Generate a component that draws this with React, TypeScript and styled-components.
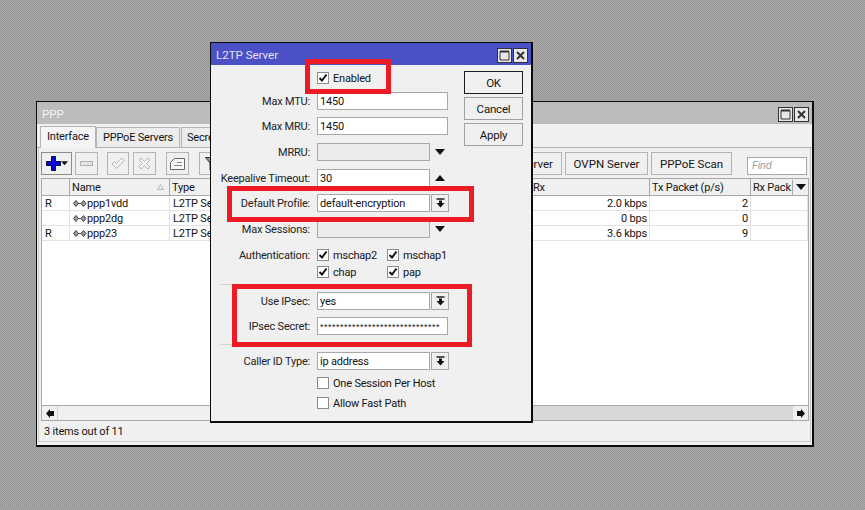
import React from "react"
import styled, { createGlobalStyle } from "styled-components"

const GlobalStyle = createGlobalStyle`
  html, body {
    margin: 0;
    padding: 0;
    height: 100%;
  }
  body {
    font-family: Roboto, "Liberation Sans", Arial, sans-serif;
    font-size: 11px;
    letter-spacing: -0.2px;
    color: #141414;
    overflow: hidden;
  }
`

const Desktop = styled.div`
  position: relative;
  width: 865px;
  height: 510px;
  overflow: hidden;
  background: repeating-conic-gradient(#a9a9a9 0 25%, #979797 0 50%) 0 0 / 2px 2px;
`

const Window = styled.div<{ $x: number; $y: number; $w: number; $h: number }>`
  position: absolute;
  left: ${p => p.$x}px;
  top: ${p => p.$y}px;
  width: ${p => p.$w}px;
  height: ${p => p.$h}px;
  box-sizing: border-box;
  display: flex;
  flex-direction: column;
  background: #f0f0f0;
  border: 1px solid #0c0c0c;
  border-width: 1px 2px 2px 1px;
`

const TitleBar = styled.div<{ $active?: boolean }>`
  flex: 0 0 22px;
  box-sizing: border-box;
  display: flex;
  align-items: center;
  justify-content: space-between;
  padding: 2px 3px 0 5px;
  background: ${p => (p.$active ? "#4b50c6" : "#bcbcbc")};
  color: ${p => (p.$active ? "#e4e4f2" : "#f4f4f4")};
  font-size: 11.5px;
  letter-spacing: 0;
`

const TitleButtons = styled.div`
  display: flex;
  gap: 1px;
`

const TitleButton = styled.div`
  width: 15px;
  height: 15px;
  box-sizing: border-box;
  border: 1px solid #333;
  background: #e8e8e8;
  display: flex;
  align-items: center;
  justify-content: center;
`

const Tabs = styled.div`
  flex: 0 0 24px;
  display: flex;
  align-items: flex-end;
  padding-left: 3px;
  border-bottom: 1px solid #b4b4b4;
  box-sizing: border-box;
`

const Tab = styled.div<{ $active?: boolean; $w?: number }>`
  width: ${p => (p.$w ? `${p.$w}px` : "auto")};
  height: ${p => (p.$active ? 22 : 20)}px;
  box-sizing: border-box;
  padding: ${p => (p.$active ? "0 0 3px" : "0 5px")};
  display: flex;
  align-items: center;
  justify-content: center;
  white-space: nowrap;
  border: 1px solid #b4b4b4;
  border-bottom: none;
  margin-right: ${p => (p.$active ? 0 : 1)}px;
  background: ${p => (p.$active ? "#f5f5f5" : "#ececec")};
  margin-bottom: ${p => (p.$active ? -1 : 0)}px;
`

const Panel = styled.div`
  flex: 1;
  display: flex;
  flex-direction: column;
  box-sizing: border-box;
  margin: 0 1px 3px 1px;
  padding: 4px 1px 0 2px;
  border: 1px solid #c8c8c8;
  border-top: none;
  min-height: 0;
`

const Toolbar = styled.div`
  flex: 0 0 23px;
  display: flex;
  align-items: stretch;
  margin-bottom: 3px;
`

const ToolButton = styled.div<{ $w: number; $ml?: number; $dark?: boolean }>`
  width: ${p => p.$w}px;
  margin-left: ${p => p.$ml ?? 0}px;
  box-sizing: border-box;
  flex: none;
  border: 1px solid ${p => (p.$dark ? "#8c8c8c" : "#b4b4b4")};
  display: flex;
  align-items: center;
  justify-content: center;
  white-space: nowrap;
  font-size: 11.5px;
  letter-spacing: 0;
`

const ToolbarEnd = styled.div`
  margin-left: auto;
  display: flex;
  align-items: stretch;
  gap: 3px;
`

const FindBox = styled.div`
  width: 60px;
  height: 18px;
  align-self: flex-end;
  box-sizing: border-box;
  margin-left: 12px;
  margin-right: 2px;
  border: 1px solid #a8a8a8;
  background: #fff;
  color: #a0a0a0;
  font-style: italic;
  padding-left: 4px;
  line-height: 16px;
`

const List = styled.div`
  flex: 1;
  display: flex;
  flex-direction: column;
  background: #fff;
  border: 1px solid #a8a8a8;
  border-width: 1px 1px 0 1px;
  min-height: 0;
`

const columns = "28px 100px 361px 119px 101px 1fr"

const HeaderRow = styled.div`
  flex: 0 0 16px;
  display: grid;
  grid-template-columns: ${columns};
  background: #f0f0f0;
  border-bottom: 1px solid #a8a8a8;
`

const HeaderCell = styled.div`
  box-sizing: border-box;
  border-right: 1px solid #a8a8a8;
  padding-left: 2px;
  display: flex;
  align-items: center;
  justify-content: space-between;
  overflow: hidden;
  white-space: nowrap;

  &:last-child {
    border-right: none;
    padding-right: 0;
  }
`

const SortMark = styled.span`
  display: flex;
  margin-right: 5px;
`

const HeaderDrop = styled.div`
  width: 15px;
  height: 15px;
  flex: none;
  border-left: 1px solid #a8a8a8;
  background: #f0f0f0;
  display: flex;
  align-items: center;
  justify-content: center;
`

const DataRow = styled.div`
  flex: 0 0 15px;
  box-sizing: border-box;
  display: grid;
  grid-template-columns: ${columns};
  border-bottom: 1px solid #e2e2e2;
`

const Cell = styled.div<{ $right?: boolean }>`
  box-sizing: border-box;
  border-right: 1px solid #e2e2e2;
  padding: 0 2px 0 3px;
  display: flex;
  align-items: center;
  justify-content: ${p => (p.$right ? "flex-end" : "flex-start")};
  white-space: nowrap;
  overflow: hidden;
`

const ListFill = styled.div`
  flex: 1;
`

const ScrollBar = styled.div`
  flex: 0 0 16px;
  display: flex;
  background: #d8d8d8;
  border: 1px solid #a8a8a8;
  box-sizing: border-box;
`

const ScrollArrow = styled.div`
  width: 15px;
  flex: none;
  background: #f0f0f0;
  display: flex;
  align-items: center;
  justify-content: center;
`

const ScrollThumb = styled.div`
  flex: 0 0 300px;
  background: #f0f0f0;
  border-left: 1px solid #d0d0d0;
  border-right: 1px solid #a8a8a8;
`

const ScrollTrack = styled.div`
  flex: 1;
`

const StatusBar = styled.div`
  flex: 0 0 20px;
  display: flex;
  align-items: center;
  padding-left: 3px;
`

const DialogBody = styled.div`
  flex: 1;
  display: flex;
  min-height: 0;
`

const Form = styled.div`
  width: 252px;
  flex: none;
  display: flex;
  flex-direction: column;
  padding-top: 7px;
`

const FormRow = styled.div<{ $mb?: number; $mt?: number }>`
  display: flex;
  align-items: center;
  height: 18px;
  margin-top: ${p => p.$mt ?? 0}px;
  margin-bottom: ${p => p.$mb ?? 7}px;
`

const CheckRow = styled.div<{ $mb?: number; $flush?: boolean }>`
  display: flex;
  align-items: center;
  height: 12px;
  padding-left: ${p => (p.$flush ? 0 : 106)}px;
  margin-bottom: ${p => p.$mb ?? 5}px;
`

const Label = styled.div`
  width: 99px;
  margin-right: 7px;
  padding-top: 1px;
  flex: none;
  text-align: right;
  white-space: nowrap;
  color: #222;
`

const Field = styled.div<{ $w?: number; $off?: boolean }>`
  width: ${p => p.$w ?? 131}px;
  height: 18px;
  box-sizing: border-box;
  flex: none;
  border: 1px solid #a8a8a8;
  background: ${p => (p.$off ? "#ececec" : "#fff")};
  padding-left: 2px;
  line-height: 18px;
  white-space: nowrap;
  overflow: hidden;
`

const SecretText = styled.span`
  font-family: "Liberation Sans", Arial, sans-serif;
  font-size: 9px;
  letter-spacing: 0.5px;
`

const SelectButton = styled.div`
  width: 18px;
  height: 18px;
  box-sizing: border-box;
  margin-left: 1px;
  border: 1px solid #a8a8a8;
  display: flex;
  align-items: center;
  justify-content: center;
`

const SpinSlot = styled.div`
  width: 18px;
  height: 18px;
  margin-left: 1px;
  display: flex;
  align-items: center;
  justify-content: center;
`

const Box = styled.div`
  width: 12px;
  height: 12px;
  flex: none;
  box-sizing: border-box;
  border: 1px solid #8c8c8c;
  background: #fff;
  display: flex;
  align-items: center;
  justify-content: center;
`

const CheckText = styled.span<{ $w?: number }>`
  margin-left: 4px;
  white-space: nowrap;
  width: ${p => (p.$w ? `${p.$w}px` : "auto")};
`

const Separator = styled.div`
  height: 1px;
  width: 228px;
  margin-left: 9px;
  background: #d4d4d4;
`

const ActionColumn = styled.div`
  display: flex;
  flex-direction: column;
  gap: 3px;
  padding: 6px 0 0 1px;
`

const ActionButton = styled.div<{ $main?: boolean }>`
  width: 59px;
  height: 23px;
  box-sizing: border-box;
  border: 1px solid ${p => (p.$main ? "#1c1c1c" : "#a0a0a0")};
  display: flex;
  align-items: center;
  justify-content: center;
  font-size: 11.5px;
`

const Highlight = styled.div<{ $x: number; $y: number; $w: number; $h: number }>`
  position: absolute;
  left: ${p => p.$x}px;
  top: ${p => p.$y}px;
  width: ${p => p.$w}px;
  height: ${p => p.$h}px;
  box-sizing: border-box;
  border: 5px solid #ed1c24;
  pointer-events: none;
`

const Check = () => (
  <svg width="10" height="10" viewBox="0 0 10 10">
    <path d="M1.5 5 L4 7.5 L8.5 1.5" fill="none" stroke="#111" strokeWidth="2" />
  </svg>
)

const MaxIcon = () => (
  <svg width="11" height="11" viewBox="0 0 11 11">
    <path d="M1 1.5 H10 V10 H1 Z" fill="none" stroke="#333" strokeWidth="1" />
    <path d="M1 1.5 H10" stroke="#333" strokeWidth="2" />
  </svg>
)

const CloseIcon = () => (
  <svg width="9" height="9" viewBox="0 0 9 9">
    <path d="M1 1 L8 8 M8 1 L1 8" stroke="#333" strokeWidth="2" />
  </svg>
)

const TriangleDown = ({ size = 9 }: { size?: number }) => (
  <svg width={size} height={size / 2 + 1} viewBox="0 0 10 6">
    <path d="M0 0 H10 L5 6 Z" fill="#111" />
  </svg>
)

const TriangleUp = () => (
  <svg width="10" height="6" viewBox="0 0 10 6">
    <path d="M0 6 H10 L5 0 Z" fill="#111" />
  </svg>
)

const SelectIcon = () => (
  <svg width="9" height="10" viewBox="0 0 9 10">
    <path d="M0.5 1 H8.5" stroke="#111" strokeWidth="1.4" />
    <path d="M3 2.5 H6 V5 H8.5 L4.5 9.5 L0.5 5 H3 Z" fill="#111" />
  </svg>
)

const PlusIcon = () => (
  <svg width="15" height="15" viewBox="0 0 15 15">
    <path d="M5.5 0.5 H9.5 V5.5 H14.5 V9.5 H9.5 V14.5 H5.5 V9.5 H0.5 V5.5 H5.5 Z" fill="#0a0ad8" stroke="#0a0a40" strokeWidth="1" />
  </svg>
)

const MinusIcon = () => (
  <svg width="13" height="5" viewBox="0 0 13 5">
    <rect x="0.5" y="0.5" width="12" height="4" fill="#e4e4e4" stroke="#b0b0b0" />
  </svg>
)

const TickIcon = () => (
  <svg width="14" height="13" viewBox="0 0 14 13">
    <path d="M1 7 L3.5 4.5 L5.5 6.5 L10.5 1 L13 3.5 L5.5 11.5 Z" fill="#f4f4f4" stroke="#b4b4b4" />
  </svg>
)

const CrossIcon = () => (
  <svg width="13" height="13" viewBox="0 0 13 13">
    <path d="M3 1 L6.5 4.5 L10 1 L12 3 L8.5 6.5 L12 10 L10 12 L6.5 8.5 L3 12 L1 10 L4.5 6.5 L1 3 Z" fill="#f4f4f4" stroke="#b4b4b4" />
  </svg>
)

const NoteIcon = () => (
  <svg width="15" height="12" viewBox="0 0 15 12">
    <path d="M4.5 0.5 H14.5 V11.5 H0.5 V4.5 Z" fill="#f8f8f8" stroke="#666" />
    <path d="M7 4.5 H12 M4 7.5 H12" stroke="#888" />
  </svg>
)

const FilterIcon = () => (
  <svg width="13" height="14" viewBox="0 0 13 14">
    <path d="M0.5 0.5 H12.5 L8 6 V13 L5 13 V6 Z" fill="#8a93a6" stroke="#333" />
  </svg>
)

const LinkIcon = () => (
  <svg width="14" height="7" viewBox="0 0 14 7">
    <path d="M3 0.5 L5.5 3.5 L3 6.5 L0.5 3.5 Z M10.5 0.5 L13 3.5 L10.5 6.5 L8 3.5 Z" fill="#999" stroke="#444" strokeWidth="1" />
    <path d="M5.5 3.5 H8" stroke="#444" />
  </svg>
)

const SortIcon = () => (
  <svg width="7" height="6" viewBox="0 0 7 6">
    <path d="M3.5 0.5 L6.5 5.5 H0.5 Z" fill="#ececec" stroke="#b8b8b8" />
  </svg>
)

const ArrowLeft = () => (
  <svg width="8" height="9" viewBox="0 0 8 9">
    <path d="M0 4.5 L4 0 V2 H8 V7 H4 V9 Z" fill="#111" />
  </svg>
)

const ArrowRight = () => (
  <svg width="8" height="9" viewBox="0 0 8 9">
    <path d="M8 4.5 L4 0 V2 H0 V7 H4 V9 Z" fill="#111" />
  </svg>
)

const WindowButtons = () => (
  <TitleButtons>
    <TitleButton><MaxIcon /></TitleButton>
    <TitleButton><CloseIcon /></TitleButton>
  </TitleButtons>
)

const rows = [
  { flag: "R", name: "ppp1vdd", rx: "2.0 kbps", packets: "2" },
  { flag: "", name: "ppp2dg", rx: "0 bps", packets: "0" },
  { flag: "R", name: "ppp23", rx: "3.6 kbps", packets: "9" },
]

const PppWindow = () => (
  <Window $x={36} $y={101} $w={778} $h={346}>
    <TitleBar>
      PPP
      <WindowButtons />
    </TitleBar>
    <Tabs>
      <Tab $active $w={56}>Interface</Tab>
      <Tab $w={84}>PPPoE Servers</Tab>
      <Tab>Secrets</Tab>
    </Tabs>
    <Panel>
      <Toolbar>
        <ToolButton $w={31} $dark>
          <PlusIcon />
          <TriangleDown size={7} />
        </ToolButton>
        <ToolButton $w={23} $ml={3}><MinusIcon /></ToolButton>
        <ToolButton $w={22} $ml={9}><TickIcon /></ToolButton>
        <ToolButton $w={23} $ml={4}><CrossIcon /></ToolButton>
        <ToolButton $w={23} $ml={10}><NoteIcon /></ToolButton>
        <ToolButton $w={24} $ml={10}><FilterIcon /></ToolButton>
        <ToolbarEnd>
          <ToolButton $w={80}>L2TP Server</ToolButton>
          <ToolButton $w={83}>OVPN Server</ToolButton>
          <ToolButton $w={81}>PPPoE Scan</ToolButton>
          <FindBox>Find</FindBox>
        </ToolbarEnd>
      </Toolbar>
      <List>
        <HeaderRow>
          <HeaderCell />
          <HeaderCell>Name<SortMark><SortIcon /></SortMark></HeaderCell>
          <HeaderCell>Type</HeaderCell>
          <HeaderCell>Rx</HeaderCell>
          <HeaderCell>Tx Packet (p/s)</HeaderCell>
          <HeaderCell>
            Rx Pack
            <HeaderDrop><TriangleDown size={10} /></HeaderDrop>
          </HeaderCell>
        </HeaderRow>
        {rows.map(row => (
          <DataRow key={row.name}>
            <Cell>{row.flag}</Cell>
            <Cell><LinkIcon />{row.name}</Cell>
            <Cell>L2TP Server</Cell>
            <Cell $right>{row.rx}</Cell>
            <Cell $right>{row.packets}</Cell>
            <Cell />
          </DataRow>
        ))}
        <ListFill />
      </List>
      <ScrollBar>
        <ScrollArrow><ArrowLeft /></ScrollArrow>
        <ScrollThumb />
        <ScrollTrack />
        <ScrollArrow><ArrowRight /></ScrollArrow>
      </ScrollBar>
      <StatusBar>3 items out of 11</StatusBar>
    </Panel>
  </Window>
)

const SelectField = ({ value }: { value: string }) => (
  <>
    <Field $w={113}>{value}</Field>
    <SelectButton><SelectIcon /></SelectButton>
  </>
)

const ServerDialog = () => (
  <Window $x={210} $y={42} $w={323} $h={381}>
    <TitleBar $active>
      L2TP Server
      <WindowButtons />
    </TitleBar>
    <DialogBody>
      <Form>
        <CheckRow $mb={8}>
          <Box><Check /></Box>
          <CheckText>Enabled</CheckText>
        </CheckRow>
        <FormRow>
          <Label>Max MTU:</Label>
          <Field>1450</Field>
        </FormRow>
        <FormRow $mb={8}>
          <Label>Max MRU:</Label>
          <Field>1450</Field>
        </FormRow>
        <FormRow $mb={8}>
          <Label>MRRU:</Label>
          <Field $w={113} $off />
          <SpinSlot><TriangleDown size={10} /></SpinSlot>
        </FormRow>
        <FormRow>
          <Label>Keepalive Timeout:</Label>
          <Field $w={113}>30</Field>
          <SpinSlot><TriangleUp /></SpinSlot>
        </FormRow>
        <FormRow $mb={8}>
          <Label>Default Profile:</Label>
          <SelectField value="default-encryption" />
        </FormRow>
        <FormRow $mb={11}>
          <Label>Max Sessions:</Label>
          <Field $w={113} $off />
          <SpinSlot><TriangleDown size={10} /></SpinSlot>
        </FormRow>
        <CheckRow $flush>
          <Label>Authentication:</Label>
          <Box><Check /></Box>
          <CheckText $w={54}>mschap2</CheckText>
          <Box><Check /></Box>
          <CheckText>mschap1</CheckText>
        </CheckRow>
        <CheckRow $mb={6}>
          <Box><Check /></Box>
          <CheckText $w={54}>chap</CheckText>
          <Box><Check /></Box>
          <CheckText>pap</CheckText>
        </CheckRow>
        <Separator />
        <FormRow $mt={7}>
          <Label>Use IPsec:</Label>
          <SelectField value="yes" />
        </FormRow>
        <FormRow $mb={9}>
          <Label>IPsec Secret:</Label>
          <Field><SecretText>******************************</SecretText></Field>
        </FormRow>
        <Separator />
        <FormRow $mt={7}>
          <Label>Caller ID Type:</Label>
          <SelectField value="ip address" />
        </FormRow>
        <CheckRow $mb={8}>
          <Box />
          <CheckText>One Session Per Host</CheckText>
        </CheckRow>
        <CheckRow>
          <Box />
          <CheckText>Allow Fast Path</CheckText>
        </CheckRow>
      </Form>
      <ActionColumn>
        <ActionButton $main>OK</ActionButton>
        <ActionButton>Cancel</ActionButton>
        <ActionButton>Apply</ActionButton>
      </ActionColumn>
    </DialogBody>
  </Window>
)

export default function App() {
  return (
    <Desktop>
      <GlobalStyle />
      <PppWindow />
      <ServerDialog />
      <Highlight $x={305} $y={59} $w={86} $h={35} />
      <Highlight $x={227} $y={186} $w={247} $h={36} />
      <Highlight $x={232} $y={284} $w={240} $h={63} />
    </Desktop>
  )
}
